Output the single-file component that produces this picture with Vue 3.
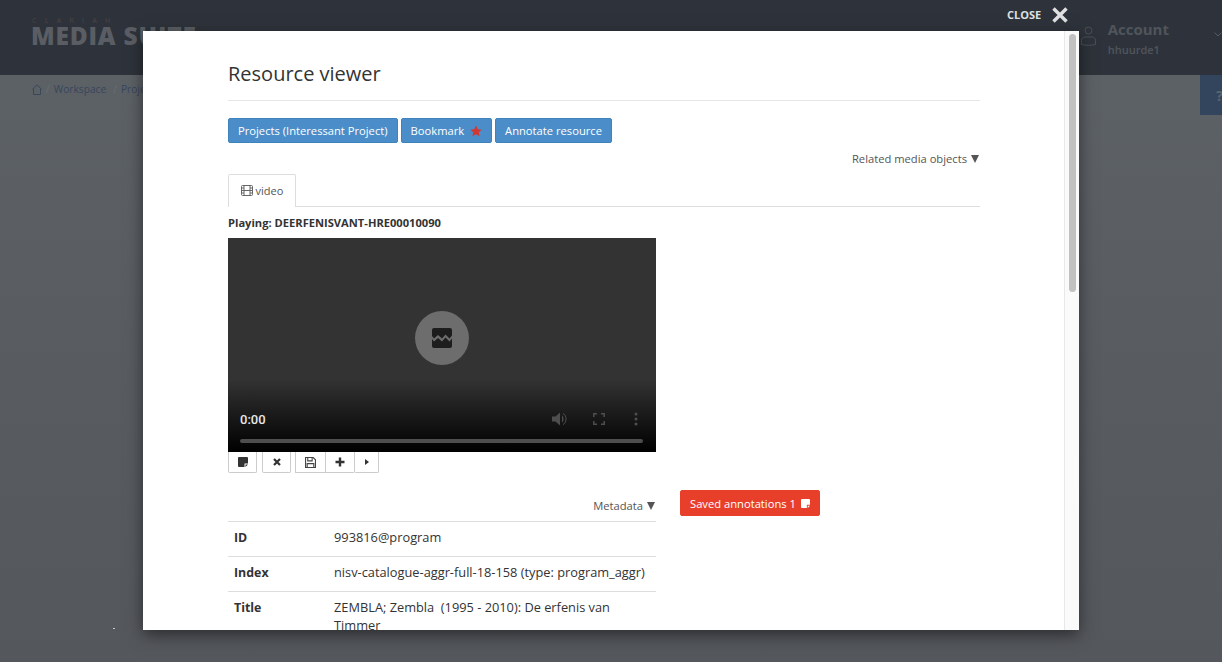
<template>
  <div class="page">
    <header class="topbar">
      <div class="logo">
        <div class="logo__small">CLARIAH</div>
        <div class="logo__big">MEDIA SUITE</div>
      </div>
      <div class="account">
        <svg class="account__icon" width="15" height="20" viewBox="0 0 15 20" fill="none" stroke="#4b5057" stroke-width="1">
          <circle cx="7.500" cy="4.500" r="3.500" />
          <path d="M.5 18.500v-4c0-2 1.500-3.500 3.500-3.500h7c2 0 3.500 1.500 3.500 3.500v4c-4 1-10 1-14 0z" />
        </svg>
        <div>
          <div class="account__label">Account</div>
          <div class="account__name">hhuurde1</div>
        </div>
        <svg class="account__chevron" width="8" height="5" viewBox="0 0 8 5" fill="none" stroke="#565b61" stroke-width="1"><path d="M.5.500 4 4 7.500.5" /></svg>
      </div>
    </header>
    <div class="crumbs">
      <svg width="10" height="11" viewBox="0 0 10 11" fill="none" stroke="#39465c" stroke-width="1"><path d="M0.300 5.500 5 0.700l4.700 4.800M1.500 5v5.500h7V5" /></svg>
      <span class="crumbs__sep">/</span><span class="crumbs__item">Workspace</span>
      <span class="crumbs__sep">/</span><span>Projects</span>
    </div>
    <div class="help">?</div>
    <div class="speck"></div>

    <div class="close">
      CLOSE
      <svg width="16" height="16" viewBox="0 0 16 16" stroke="#dfe0e2" stroke-width="3.400"><path d="M1.500 1.500l13 13M14.500 1.500l-13 13" /></svg>
    </div>

    <div class="modal">
      <div class="modal__body">
        <h1 class="title">Resource viewer</h1>
        <div class="actions">
          <button class="btn">Projects (Interessant Project)</button>
          <button class="btn">Bookmark
            <svg class="btn__star" width="12" height="12" viewBox="0 0 24 24" fill="#d3372f"><path d="M12 1l3.400 7.400 8 .9-6 5.400 1.700 8L12 18.700 4.900 22.700l1.700-8-6-5.400 8-.9z" /></svg>
          </button>
          <button class="btn">Annotate resource</button>
        </div>
        <div class="toggle toggle--related">Related media objects <span class="toggle__arrow"></span></div>
        <div class="tabs">
          <div class="tab">
            <svg width="12" height="11" viewBox="0 0 12 11" fill="none" stroke="#666" stroke-width="1"><rect x="0.500" y="0.500" width="11" height="10" rx="1" /><path d="M3 .5v10M9 .5v10M3 5.500h6M.5 3h2.500M.5 5.500h2.500M.5 8h2.500M9 3h2.500M9 5.500h2.500M9 8h2.500" /></svg>
            video
          </div>
        </div>
        <div class="playing">Playing: DEERFENISVANT-HRE00010090</div>
        <div class="columns">
          <div class="left">
            <div class="player">
              <div class="player__center">
                <svg width="20" height="20" viewBox="0 0 20 20"><path fill="#1d1d1d" d="M2 0h16a2 2 0 0 1 2 2v5.500l-2.500 3-4-4-3.500 4-4-3.500L2 10.500 0 8V2a2 2 0 0 1 2-2zM0 11l2 2.500 4-3.500 4 3.500 3.500-4 4 4 2.500-3V18a2 2 0 0 1-2 2H2a2 2 0 0 1-2-2z" /></svg>
              </div>
              <div class="player__controls">
                <span class="player__time">0:00</span>
                <svg width="16" height="14" viewBox="0 0 16 14" fill="#4e4e4e"><path d="M0 4.500h3.500L8 .5v13l-4.500-4H0zM10 3.500c2 1 2 6 0 7z" /><path d="M11 1.500c4 1.500 4 9.500 0 11" fill="none" stroke="#4e4e4e" /></svg>
                <svg class="player__full" width="12" height="12" viewBox="0 0 12 12" fill="none" stroke="#4e4e4e" stroke-width="1.500"><path d="M.8 4V.8H4M8 .8h3.200V4M11.200 8v3.200H8M4 11.200H.8V8" /></svg>
                <svg class="player__more" width="4" height="14" viewBox="0 0 4 14" fill="#4e4e4e"><circle cx="2" cy="2" r="1.500" /><circle cx="2" cy="7" r="1.500" /><circle cx="2" cy="12" r="1.500" /></svg>
              </div>
              <div class="player__track"></div>
            </div>
            <div class="tools">
              <button class="tool">
                <svg width="10" height="10" viewBox="0 0 10 10" fill="#333"><path d="M1 0h8a1 1 0 0 1 1 1v5.500H6.500v3.500H1a1 1 0 0 1-1-1V1a1 1 0 0 1 1-1zM7.500 7.500H10L7.500 10z" /></svg>
              </button>
              <button class="tool">
                <svg width="8" height="8" viewBox="0 0 8 8" stroke="#333" stroke-width="2.200"><path d="M1 1l6 6M7 1L1 7" /></svg>
              </button>
              <div class="tool-group">
                <button class="tool tool--wide">
                  <svg width="11" height="11" viewBox="0 0 10 10" fill="none" stroke="#444" stroke-width="1"><path d="M.5.500h7l2 2v7h-9zM2.500.500v3h4v-3M2 9.500v-3.500h6v3.500" /></svg>
                </button>
                <button class="tool tool--wide tool--plus">
                  <svg width="10" height="10" viewBox="0 0 10 10" stroke="#333" stroke-width="2.400"><path d="M5 .5v9M.5 5h9" /></svg>
                </button>
                <button class="tool tool--small">
                  <svg width="4" height="6" viewBox="0 0 4 6" fill="#333"><path d="M0 0l4 3-4 3z" /></svg>
                </button>
              </div>
            </div>
            <div class="toggle toggle--meta">Metadata <span class="toggle__arrow"></span></div>
            <table class="meta">
              <tbody>
                <tr v-for="row in rows" :key="row.label">
                  <th>{{ row.label }}</th>
                  <td>{{ row.value }}</td>
                </tr>
              </tbody>
            </table>
          </div>
          <div class="right">
            <button class="btn btn--red">Saved annotations 1
              <svg width="9" height="9" viewBox="0 0 10 10" fill="#fff"><path d="M1 0h8a1 1 0 0 1 1 1v5.500H6.500v3.500H1a1 1 0 0 1-1-1V1a1 1 0 0 1 1-1zM7.500 7.500H10L7.500 10z" /></svg>
            </button>
          </div>
        </div>
      </div>
      <div class="scrollbar"><div class="scrollbar__thumb"></div></div>
    </div>
  </div>
</template>

<script setup>
const rows = [
  { label: 'ID', value: '993816@program' },
  { label: 'Index', value: 'nisv-catalogue-aggr-full-18-158 (type: program_aggr)' },
  { label: 'Title', value: 'ZEMBLA; Zembla  (1995 - 2010): De erfenis van Timmer' }
]
</script>

<style>
html,
body {
  margin: 0;
  overflow: hidden;
}
</style>

<style scoped>
.page {
  position: relative;
  width: 1222px;
  height: 662px;
  overflow: hidden;
  background: linear-gradient(#5c6166 75px, #54575c 100%);
  font-family: "Open Sans", sans-serif;
  font-size: 12px;
  color: #333;
}

.topbar {
  height: 75px;
  background: #2e333b;
  display: flex;
  justify-content: space-between;
  box-sizing: border-box;
  padding: 17px 0 0 32px;
}

.logo__small {
  font-size: 7px;
  line-height: 7px;
  letter-spacing: 8.300px;
  color: #4d4344;
}

.logo__big {
  margin-left: -1px;
  font-size: 24.500px;
  line-height: 24px;
  font-weight: 800;
  letter-spacing: 0.800px;
  color: #5a5e64;
  white-space: nowrap;
}

.account {
  display: flex;
  gap: 12px;
  padding-top: 3px;
}

.account__icon {
  margin-top: 6px;
}

.account__label {
  font-size: 15px;
  line-height: 18px;
  font-weight: 700;
  color: #50555b;
}

.account__name {
  font-size: 11px;
  line-height: 16px;
  font-weight: 600;
  color: #50555b;
  margin-top: 4px;
}

.account__chevron {
  margin: 12px 0 0 33px;
}

.crumbs {
  display: flex;
  align-items: center;
  height: 28px;
  padding-left: 32px;
  gap: 4px;
  font-size: 10.200px;
  color: #39465c;
}

.crumbs__sep {
  color: #6a6e73;
}

.crumbs__item {
  margin-right: 3px;
}

.help {
  position: absolute;
  left: 1200px;
  top: 75px;
  width: 22px;
  height: 40px;
  box-sizing: border-box;
  padding: 10px 0 0 16px;
  background: #33455c;
  color: #5a6470;
  font-size: 15px;
  font-weight: 700;
}

.speck {
  position: absolute;
  left: 113px;
  top: 628px;
  width: 2px;
  height: 1px;
  background: #c8c8c8;
}

.close {
  position: absolute;
  left: 1007px;
  top: 7px;
  display: flex;
  align-items: center;
  gap: 11px;
  font-size: 11px;
  line-height: 16px;
  font-weight: 700;
  color: #dfe0e2;
}

.modal {
  position: absolute;
  left: 143px;
  top: 31px;
  width: 936px;
  height: 599px;
  background: #fff;
  box-shadow: 0 5px 15px rgba(0, 0, 0, 0.5);
  overflow: hidden;
}

.modal__body {
  padding: 0 99px 0 85px;
}

.title {
  margin: 0;
  padding: 29px 0 13px;
  font-size: 20px;
  line-height: 27px;
  font-weight: 500;
  color: #333;
  border-bottom: 1px solid #e5e5e5;
}

.actions {
  display: flex;
  gap: 3px;
  margin-top: 17px;
}

.btn {
  height: 25px;
  padding: 0 9px;
  border: 1px solid #3f83bd;
  border-radius: 2px;
  background: #4a8dc9;
  color: #fff;
  font-family: inherit;
  font-size: 11.200px;
  font-weight: 500;
  white-space: nowrap;
}

.btn__star {
  margin-left: 3px;
  vertical-align: -2px;
}

.btn--red {
  display: flex;
  align-items: center;
  gap: 5px;
  height: 26px;
  border-color: #e83f2b;
  background: #e83f2b;
}

.toggle {
  display: flex;
  justify-content: flex-end;
  align-items: center;
  gap: 4px;
  padding-right: 1px;
  font-size: 11.200px;
  line-height: 16px;
  color: #555;
}

.toggle__arrow {
  width: 0;
  height: 0;
  border-left: 4px solid transparent;
  border-right: 4px solid transparent;
  border-top: 8px solid #555;
}

.toggle--related {
  margin-top: 8px;
}

.tabs {
  margin-top: 7px;
  height: 32px;
  border-bottom: 1px solid #ddd;
}

.tab {
  width: 68px;
  height: 33px;
  box-sizing: border-box;
  padding-bottom: 2px;
  display: flex;
  align-items: center;
  justify-content: center;
  gap: 3px;
  border: 1px solid #ddd;
  border-bottom: 0;
  border-radius: 2px 2px 0 0;
  background: #fff;
  font-size: 11px;
  color: #555;
}

.playing {
  margin-top: 8px;
  font-size: 11.150px;
  line-height: 16px;
  font-weight: 700;
}

.columns {
  display: flex;
  gap: 24px;
  margin-top: 7px;
}

.left {
  width: 428px;
  flex: none;
}

.right {
  padding-top: 252px;
}

.player {
  height: 214px;
  position: relative;
  display: flex;
  flex-direction: column;
  justify-content: flex-end;
  background: linear-gradient(#333 0, #333 66%, #000 100%);
}

.player__center {
  position: absolute;
  left: 187px;
  top: 73px;
  width: 54px;
  height: 54px;
  border-radius: 50%;
  background: #6d6d6d;
  display: flex;
  align-items: center;
  justify-content: center;
}

.player__controls {
  display: flex;
  align-items: center;
  padding: 0 18px 0 12px;
  height: 20px;
  margin-bottom: 10px;
}

.player__time {
  flex: 1;
  font-family: Roboto, sans-serif;
  font-size: 13px;
  font-weight: 500;
  color: #e8e8e8;
}

.player__full {
  margin-left: 25px;
}

.player__more {
  margin-left: 29px;
}

.player__track {
  height: 4px;
  margin: 0 13px 9px 12px;
  border-radius: 2px;
  background: #4e4e4e;
}

.tools {
  display: flex;
  gap: 5px;
}

.tool {
  width: 29px;
  height: 21px;
  padding: 0;
  box-sizing: border-box;
  display: flex;
  align-items: center;
  justify-content: center;
  background: #fff;
  border: 1px solid #ccc;
  border-top: 0;
  border-radius: 0 0 2px 2px;
}

.tool-group {
  display: flex;
  margin-left: -1px;
}

.tool--wide {
  border-radius: 0;
  border-right: 0;
  width: 30px;
}

.tool--plus {
  width: 29px;
}

.tool--small {
  width: 25px;
}

.toggle--meta {
  margin-top: 25px;
}

.meta {
  width: 100%;
  margin-top: 7px;
  border-collapse: collapse;
  font-size: 12.800px;
  line-height: 18px;
}

.meta tr {
  border-top: 1px solid #ddd;
}

.meta th,
.meta td {
  padding: 6px 6px 10px;
  text-align: left;
  vertical-align: top;
}

.meta td {
  white-space: pre-wrap;
}

.meta th {
  width: 88px;
  padding-top: 7px;
  padding-bottom: 9px;
  font-size: 12.400px;
  font-weight: 700;
}

.scrollbar {
  position: absolute;
  right: 0;
  top: 0;
  bottom: 0;
  width: 15px;
  box-sizing: border-box;
  padding: 3px 3px 0 4px;
  background: #fafafa;
  border-left: 1px solid #e8e8e8;
}

.scrollbar__thumb {
  height: 258px;
  border-radius: 4px;
  background: #c1c1c1;
}
</style>
